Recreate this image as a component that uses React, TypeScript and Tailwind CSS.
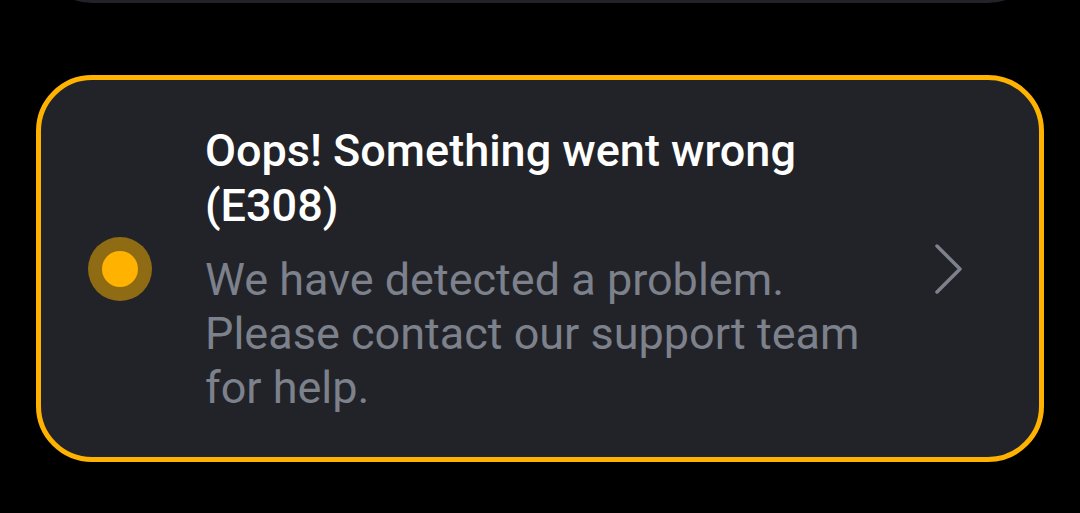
export default function App() {
  return (
    <div className="min-h-[513px] w-full overflow-hidden bg-black px-[36px] font-['Roboto',sans-serif]">
      {/* previous card, mostly scrolled off */}
      <div className="-mt-[117px] h-[120px] rounded-[56px] bg-[#222329]" />

      <div className="mt-[72px] flex h-[387px] items-center rounded-[56px] border-[5px] border-[#ffb300] bg-[#222329] pl-[47px] pr-[75px]">
        <div className="flex h-16 w-16 shrink-0 items-center justify-center rounded-full bg-[#8f6b14]">
          <div className="h-9 w-9 rounded-full bg-[#ffb300]" />
        </div>

        <div className="ml-[53px] w-[680px] shrink-0">
          <h2 className="text-[45px] font-medium leading-[55px] text-white">
            Oops! Something went wrong (E308)
          </h2>
          <p className="mt-5 text-[45px] leading-[54px] text-[#7c818b]">
            We have detected a problem. Please contact our support team for help.
          </p>
        </div>

        <svg className="ml-auto shrink-0" width="30" height="52" viewBox="0 0 30 52" fill="none">
          <polyline
            points="3,3 26,26 3,49"
            stroke="#7c818b"
            strokeWidth="3.5"
            strokeLinecap="round"
            strokeLinejoin="round"
          />
        </svg>
      </div>
    </div>
  );
}
